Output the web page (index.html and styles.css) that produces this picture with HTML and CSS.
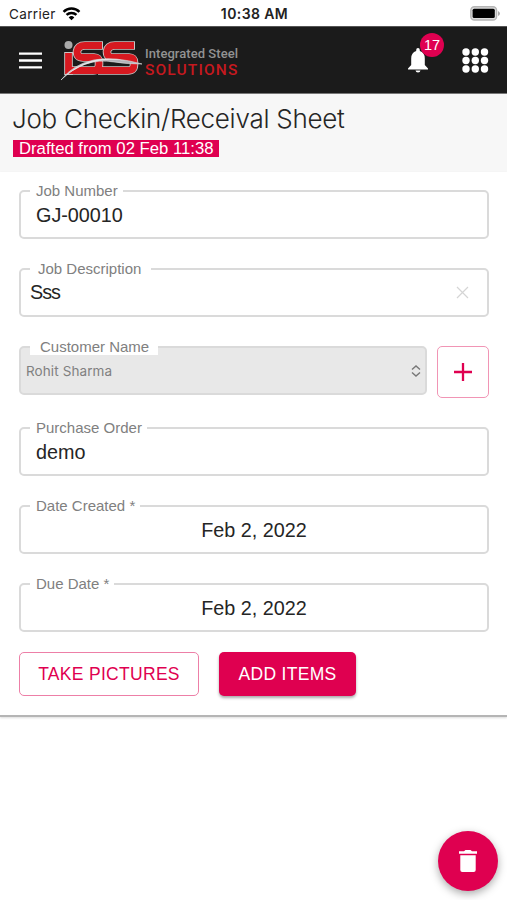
FILE: index.html
```html
<!DOCTYPE html>
<html lang="en">
<head>
<meta charset="utf-8">
<title>Job Checkin/Receival Sheet</title>
<link rel="stylesheet" href="styles.css">
</head>
<body>
<div class="status">
  <div class="status-left"><span class="carrier">Carrier</span>
    <svg width="19" height="14" viewBox="0 0 20 15"><g fill="none" stroke="#000" stroke-width="2.700"><path d="M1.500 5.200a12 12 0 0 1 17 0"/><path d="M4.700 8.500a7.600 7.600 0 0 1 10.600 0"/></g><path d="M10 14.200l-3-3a4.300 4.300 0 0 1 6 0z"/></svg>
  </div>
  <div class="time">10:38 AM</div>
  <svg class="battery" width="31" height="15" viewBox="0 0 31 15"><rect x=".8" y=".8" width="25.800" height="13.200" rx="3.600" fill="#ddd" stroke="#b5b5b5" stroke-width="1.400"/><rect x="2.600" y="2.700" width="22.200" height="9.400" rx="1.500" fill="#000"/><path d="M28 5v5q2-1 2-2.500t-2-2.500z" fill="#aaa"/></svg>
</div>
<header class="appbar">
  <svg class="menu" width="23" height="17" viewBox="0 0 23 17"><path d="M0 1.600h23M0 8.500h23M0 15.400h23" stroke="#fff" stroke-width="2.300"/></svg>
  <svg class="logo" width="82" height="42" viewBox="0 0 82 42">
    <g fill="none">
      <path d="M7.500 12v23M42 5.500H24q-7 0-8 6q0 6 6 6h11q5 0 5 5v2q0 6-6 6H11M74 5.500H54q-7 0-8 6q0 6 6 6h16q5 0 5 5v2q0 6-6 6H37" stroke="#c9c5c5" stroke-width="8.600"/>
      <path d="M7.500 13v21M41 5.500H24q-7 0-8 6q0 6 6 6h11q5 0 5 5v2q0 6-6 6H8M73 5.500H54q-7 0-8 6q0 6 6 6h16q5 0 5 5v2q0 6-6 6H34" stroke="#d71920" stroke-width="6.800"/>
    </g>
    <circle cx="7.500" cy="5" r="4" fill="#aaa"/>
    <path d="M0 40Q25 8 81 24Q65 24 53 22Q23 17 0 40z" fill="#b4b4bb" stroke="#ddd" stroke-width=".6"/>
    <path d="M1 39Q27 12 66 21Q28 15 1 39z" fill="#e5e5e7"/>
  </svg>
  <div class="brand"><div class="brand-top">Integrated Steel</div><div class="brand-bottom">SOLUTIONS</div></div>
  <div class="bell">
    <svg width="20" height="25" viewBox="0 0 20 25"><path d="M10 0q1.800 0 1.800 2v1q5 1.500 5 7.500v6.500l3.200 3.500v1H0v-1L3.200 17v-6.500q0-6 5-7.500V2q0-2 1.800-2zM7.500 22.500h5q-.3 2-2.500 2t-2.500-2z" fill="#fff"/></svg>
    <span class="badge">17</span>
  </div>
  <svg class="apps" width="27" height="25" viewBox="0 0 27 25" fill="#fff"><circle cx="4" cy="4" r="3.700"/><circle cx="13.300" cy="4" r="3.700"/><circle cx="22.500" cy="4" r="3.700"/><circle cx="4" cy="12.500" r="3.700"/><circle cx="13.300" cy="12.500" r="3.700"/><circle cx="22.500" cy="12.500" r="3.700"/><circle cx="4" cy="21" r="3.700"/><circle cx="13.300" cy="21" r="3.700"/><circle cx="22.500" cy="21" r="3.700"/></svg>
</header>
<section class="heading">
  <h1>Job Checkin/Receival Sheet</h1>
  <span class="draft">Drafted from 02 Feb 11:38</span>
</section>
<main class="form">
  <div class="field"><label>Job Number</label><span class="value">GJ-00010</span></div>
  <div class="field description"><label>Job Description</label><span class="value">Sss</span>
    <svg width="13" height="13" viewBox="0 0 13 13"><path d="M1 1l11 11M12 1L1 12" stroke="#d5d5d5" stroke-width="1.200"/></svg></div>
  <div class="row">
    <div class="field customer"><label>Customer Name</label><span class="value">Rohit Sharma</span>
      <svg width="10" height="12" viewBox="0 0 10 12"><path d="M1 4.500L5 1l4 3.500M1 7.500L5 11l4-3.500" fill="none" stroke="#777" stroke-width="1.400"/></svg></div>
    <button class="plus" aria-label="Add customer"><svg width="18" height="18" viewBox="0 0 18 18"><path d="M9 0v18M0 9h18" stroke="#df0050" stroke-width="2.300"/></svg></button>
  </div>
  <div class="field"><label>Purchase Order</label><span class="value">demo</span></div>
  <div class="field date"><label>Date Created *</label><span class="value">Feb 2, 2022</span></div>
  <div class="field date"><label>Due Date *</label><span class="value">Feb 2, 2022</span></div>
  <div class="actions"><button class="outlined">TAKE PICTURES</button><button class="filled">ADD ITEMS</button></div>
</main>
<button class="fab" aria-label="Delete"><svg width="18" height="22" viewBox="0 0 18 22" fill="#fff"><path d="M0 1.300h5L6.500 0h5L13 1.300h5v2.500H0zM1.300 5.200h15.400V20q0 2-2 2H3.300q-2 0-2-2z"/></svg></button>
</body>
</html>
```
FILE: styles.css
```css
* { box-sizing: border-box; }
body { margin: 0; width: 507px; height: 900px; overflow: hidden; background: #fff; color: #252525; font-family: "Liberation Sans", Arial, sans-serif; }
svg { display: block; flex: none; }
button { padding: 0; font: inherit; display: flex; align-items: center; justify-content: center; }
.status { height: 26px; padding: 0 6px 0 9px; display: grid; grid-template-columns: 1fr auto 1fr; align-items: center; color: #222; }
.status-left { display: flex; align-items: center; gap: 6px; }
.carrier { font: 13.500px/26px Inter, sans-serif; letter-spacing: .35px; padding-top: 1px; }
.time { font: 600 14px/26px Inter, sans-serif; letter-spacing: .4px; padding-top: 1px; margin-left: -1px; }
.battery { justify-self: end; }
.appbar { height: 68px; background: #1b1b1b; border-top: 1px solid #555; border-bottom: 1px solid #777; display: flex; align-items: center; padding: 0 19px; }
.logo { margin: 2px 0 0 19px; }
.brand { margin: 3px 0 0 2px; font-family: Roboto, sans-serif; font-weight: 500; white-space: nowrap; }
.brand-top { font-size: 13px; line-height: 16px; color: #929292; letter-spacing: .05px; }
.brand-bottom { font-size: 15.500px; line-height: 16px; color: #c5191f; letter-spacing: 1.150px; }
.bell { position: relative; margin-left: auto; margin-right: 1px; }
.badge { position: absolute; left: 12px; top: -15px; width: 24px; height: 24px; border-radius: 50%; background: #df0050; color: #fff; font-size: 14.500px; line-height: 25px; text-align: center; }
.apps { margin-left: 33px; margin-right: -1px; }
.heading { height: 78px; background: #f7f7f7; padding: 8px 12px 0 13px; }
h1 { margin: 0 0 0 -1px; font: 300 26px/34px Inter, sans-serif; letter-spacing: -.27px; white-space: nowrap; }
.draft { display: block; width: 206px; height: 17px; margin-top: 4px; padding-left: 6px; background: #df0050; color: #fff; font-size: 16.700px; line-height: 18px; letter-spacing: 0; white-space: nowrap; }
.form { height: 545px; padding: 18px 18px 0 19px; display: flex; flex-direction: column; gap: 29px; border-bottom: 2px solid #b5b5b5; box-shadow: 0 1px 2px #ddd; }
.field { position: relative; height: 49px; border: 2px solid #dadada; border-radius: 5px; display: flex; align-items: center; padding: 0 15px; flex: none; }
.field label { position: absolute; left: 9px; top: -9px; padding: 0 5px 0 6px; background: #fff; color: #808080; font-size: 15px; line-height: 16px; letter-spacing: 0; white-space: nowrap; }
.value { font-size: 19.800px; line-height: 24px; padding-top: 1px; white-space: nowrap; }
.description { padding: 0 18px 0 9px; justify-content: space-between; }
.description .value { letter-spacing: -1px; margin-top: -2px; }
.description label { padding: 0 10px 0 8px; }
.row { display: flex; gap: 10px; height: 52px; }
.customer { flex: 1; background: #e8e8e8; justify-content: space-between; padding: 0 4px 0 5px; }
.customer label { padding: 0 9px 0 10px; }
.customer .value { font: 13.500px/20px Inter, sans-serif; letter-spacing: .1px; color: #808080; }
.plus { width: 52px; height: 52px; border: 1.500px solid #f195b5; border-radius: 5px; background: #fff; }
.date { justify-content: center; }
.actions { display: flex; gap: 20px; margin-top: -9px; }
.actions button { height: 44px; border-radius: 5px; font-size: 17.500px; letter-spacing: .3px; padding-top: 1px; white-space: nowrap; }
.actions .outlined { width: 180px; border: 1px solid #ed7fa7; background: #fff; color: #df0050; }
.actions .filled { width: 137px; border: 0; background: #df0050; color: #fff; box-shadow: 0 2px 3px #aaa; }
.fab { position: absolute; left: 438px; top: 831px; width: 60px; height: 60px; border: 0; border-radius: 50%; background: #df0050; box-shadow: 0 3px 8px #aaa; }
```
